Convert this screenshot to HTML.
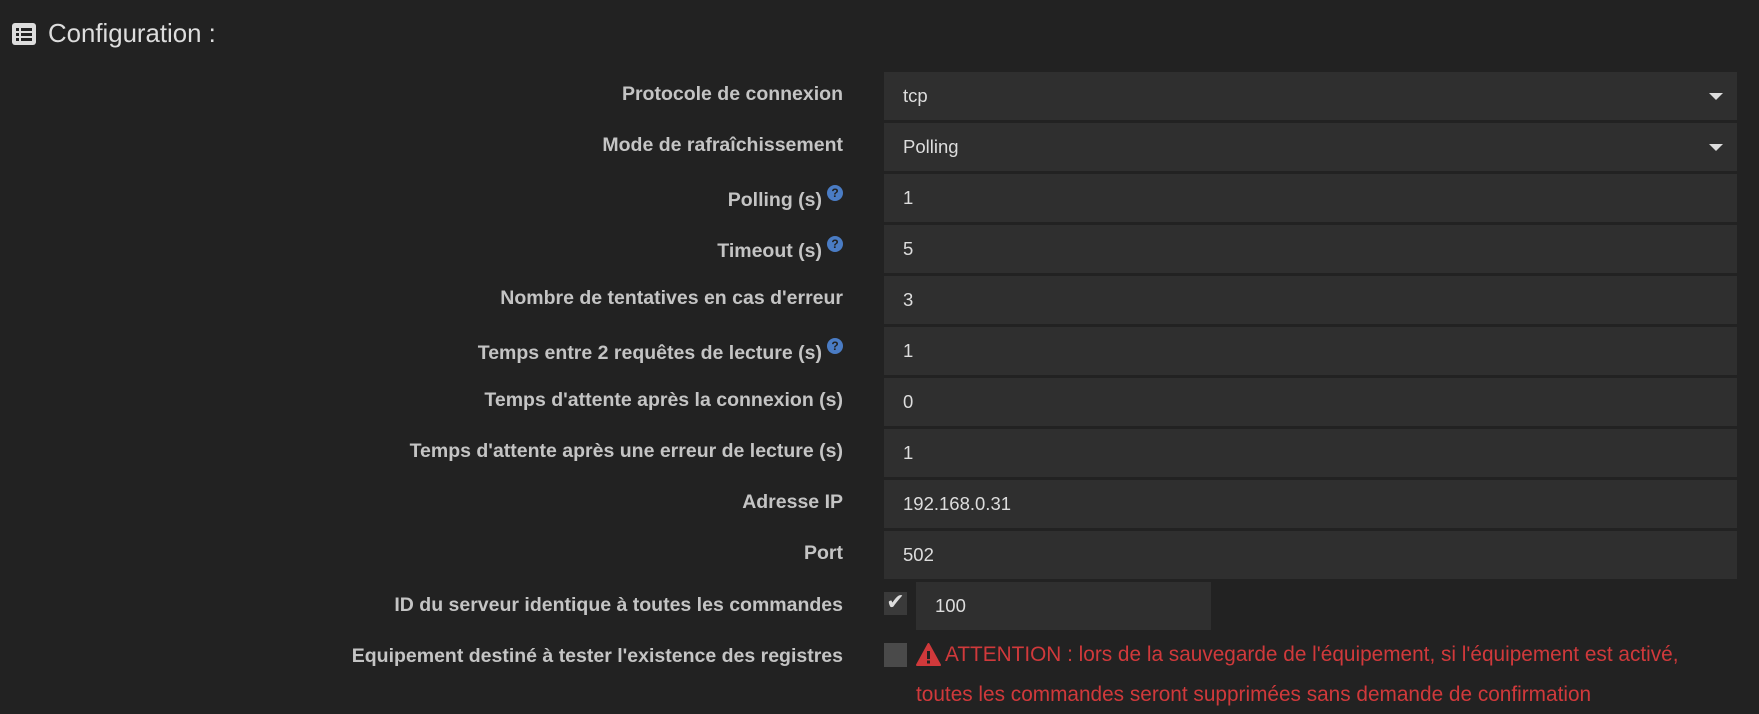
<!DOCTYPE html>
<html><head><meta charset="utf-8"><style>
body{margin:0;width:1759px;height:714px;background:#222;font-family:"Liberation Sans",sans-serif;overflow:hidden;position:relative;color:#ccc}
.t{position:absolute;left:48px;top:20px;font-size:25.8px;color:#ddd}
.ic{position:absolute;left:12px;top:23px;width:24px;height:22px;background:#ddd;border-radius:3px}
.ic i{position:absolute;height:3px;background:#222}
.lab{position:absolute;right:916px;font-size:19.5px;font-weight:bold;color:#c4c4c4;text-align:right;white-space:nowrap}
.f{position:absolute;left:884px;width:853px;height:48px;background:#2f2f2f;font-size:18.5px;color:#ddd;line-height:48px;text-indent:19px}
.arr{position:absolute;right:14px;top:21px;border-left:7px solid transparent;border-right:7px solid transparent;border-top:7px solid #ddd}
.q{display:inline-block;width:16px;height:16px;border-radius:50%;background:#4a7cc4;color:#222;font-size:12px;line-height:16px;text-align:center;vertical-align:9px;margin-left:5px;font-weight:bold}
.red{position:absolute;left:945px;color:#d0393b;font-size:20.8px;white-space:nowrap}
</style></head><body>
<div class="ic"><i style="left:4px;top:5px;width:3px"></i><i style="left:9px;top:5px;width:11px"></i><i style="left:4px;top:10px;width:3px"></i><i style="left:9px;top:10px;width:11px"></i><i style="left:4px;top:15px;width:3px"></i><i style="left:9px;top:15px;width:11px"></i></div>
<div class="t">Configuration :</div>

<div class="lab" style="top:83px">Protocole de connexion</div>
<div class="f" style="top:72px">tcp<span class="arr"></span></div>
<div class="lab" style="top:134px">Mode de rafraîchissement</div>
<div class="f" style="top:123px">Polling<span class="arr"></span></div>
<div class="lab" style="top:185px">Polling (s)<span class="q">?</span></div>
<div class="f" style="top:174px">1</div>
<div class="lab" style="top:236px">Timeout (s)<span class="q">?</span></div>
<div class="f" style="top:225px">5</div>
<div class="lab" style="top:287px">Nombre de tentatives en cas d'erreur</div>
<div class="f" style="top:276px">3</div>
<div class="lab" style="top:338px">Temps entre 2 requêtes de lecture (s)<span class="q">?</span></div>
<div class="f" style="top:327px">1</div>
<div class="lab" style="top:389px">Temps d'attente après la connexion (s)</div>
<div class="f" style="top:378px">0</div>
<div class="lab" style="top:440px">Temps d'attente après une erreur de lecture (s)</div>
<div class="f" style="top:429px">1</div>
<div class="lab" style="top:491px">Adresse IP</div>
<div class="f" style="top:480px">192.168.0.31</div>
<div class="lab" style="top:542px">Port</div>
<div class="f" style="top:531px">502</div>
<div class="lab" style="top:594px">ID du serveur identique à toutes les commandes</div>
<div style="position:absolute;left:884px;top:592px;width:23px;height:23px;background:#3a3a3a;color:#ddd;font-size:22px;line-height:20px;text-align:center">✔</div>
<div class="f" style="top:582px;left:916px;width:295px;height:48px">100</div>
<div class="lab" style="top:645px">Equipement destiné à tester l'existence des registres</div>
<div style="position:absolute;left:884px;top:643px;width:23px;height:24px;background:#4a4a4a"></div>
<svg style="position:absolute;left:916px;top:643px" width="25" height="23" viewBox="0 0 25 23"><path d="M12.5 1 L24 22 L1 22 Z" fill="#d0393b" stroke="#d0393b" stroke-linejoin="round" stroke-width="2"/><rect x="11" y="8" width="3" height="8" fill="#222"/><rect x="11" y="17.5" width="3" height="3" fill="#222"/></svg>
<div class="red" style="top:643px">ATTENTION : lors de la sauvegarde de l'équipement, si l'équipement est activé,</div>
<div class="red" style="top:683px;left:916px">toutes les commandes seront supprimées sans demande de confirmation</div>
</body></html>
